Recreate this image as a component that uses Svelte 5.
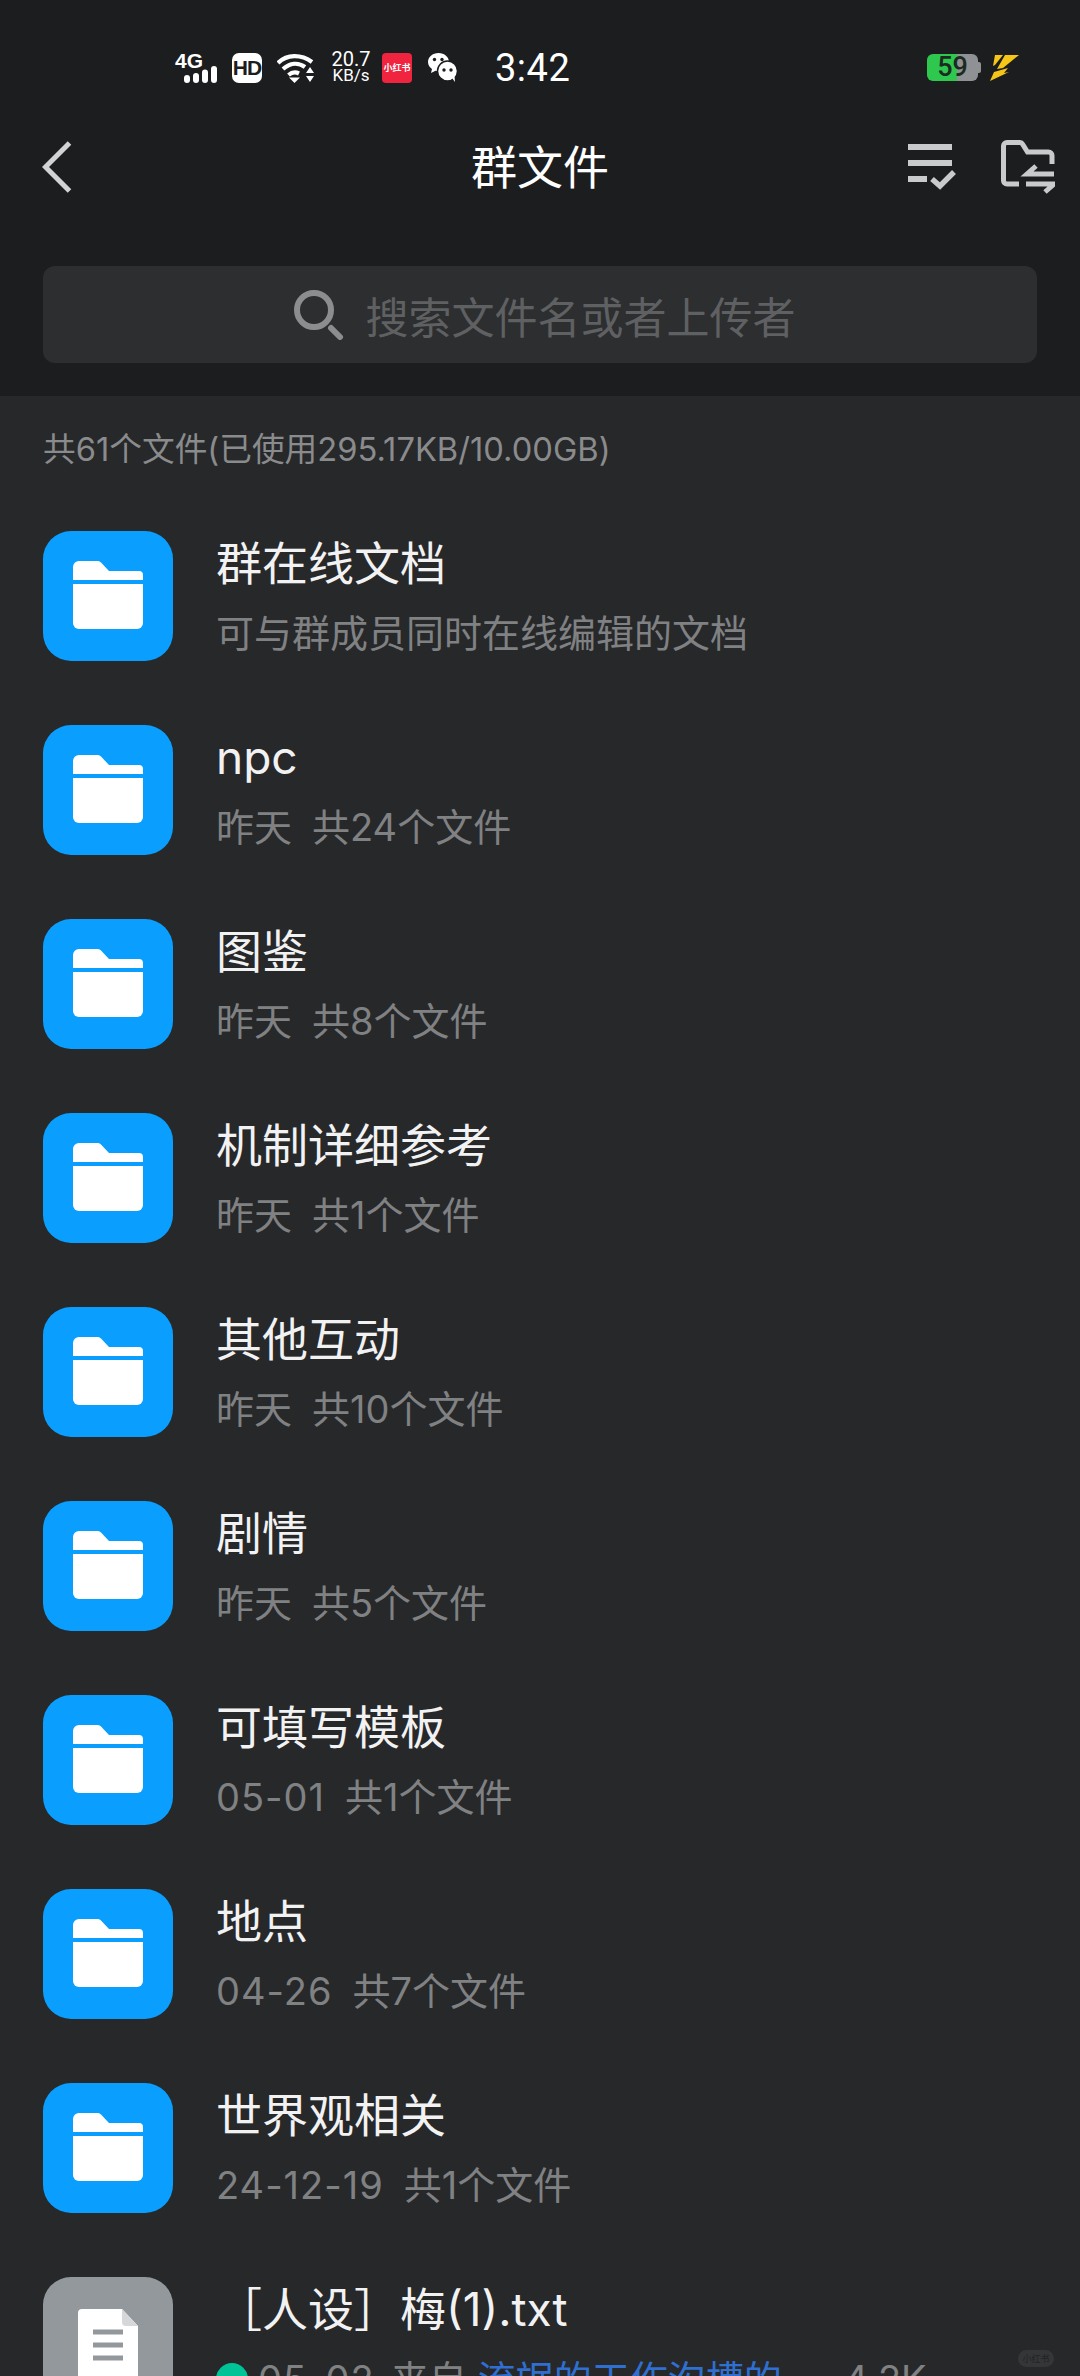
<script>
  const rows = [
    { name: '群在线文档', date: '可与群成员同时在线编辑的文档', count: '' },
    { name: 'npc', date: '昨天', count: '共24个文件' },
    { name: '图鉴', date: '昨天', count: '共8个文件' },
    { name: '机制详细参考', date: '昨天', count: '共1个文件' },
    { name: '其他互动', date: '昨天', count: '共10个文件' },
    { name: '剧情', date: '昨天', count: '共5个文件' },
    { name: '可填写模板', date: '05-01', count: '共1个文件', num: true },
    { name: '地点', date: '04-26', count: '共7个文件', num: true },
    { name: '世界观相关', date: '24-12-19', count: '共1个文件', num: true }
  ];
</script>

<div class="page">
  <header class="head">
    <div class="status">
      <div class="sig">
        <span class="g4">4G</span>
        <svg width="34" height="17" viewBox="0 0 34 17"><g fill="#fff"><rect x="0" y="9" width="6" height="8" rx="3"/><rect x="9" y="7" width="6" height="10" rx="3"/><rect x="18" y="3.500" width="6" height="13.500" rx="3"/><rect x="27" y="0" width="6" height="17" rx="3"/></g></svg>
      </div>
      <span class="hd">HD</span>
      <svg class="wifi" width="38" height="30" viewBox="0 0 38 30" fill="none" stroke="#fff" stroke-width="4.200"><path d="M1 10C10 1 24 1 35 9"/><path d="M6 16C13 10 21 9 28 14"/><path d="M11.500 22C15 19 19 19 22 20.500"/><path d="M12 24.500h11l-5.500 5.500z" fill="#fff" stroke="none"/><path d="M33 14l4 6h-8zM29 23h8l-4 6z" fill="#fff" stroke="none"/></svg>
      <div class="speed"><span>20.7</span><span class="unit">KB/s</span></div>
      <span class="xhs">小红书</span>
      <svg class="wx" width="31" height="31" viewBox="0 0 31 31"><path d="M11.500 1C5.500 1 1 5 1 10c0 3 1.500 5.300 4 7l-1 4 4.500-2.300c1.200.3 2 .4 3 .4C19 19 22 14 22 10 22 5 17.500 1 11.500 1z" fill="#fff"/><circle cx="20.500" cy="19" r="10" fill="#fff" stroke="#1c1d1f" stroke-width="1.500"/><path d="M25 26l3 4-.5-6z" fill="#fff"/><circle cx="7.500" cy="7.500" r="1.700" fill="#1c1d1f"/><circle cx="15" cy="7.500" r="1.700" fill="#1c1d1f"/><circle cx="17" cy="18" r="1.700" fill="#1c1d1f"/><circle cx="24" cy="18" r="1.700" fill="#1c1d1f"/></svg>
      <span class="time">3:42</span>
      <div class="spacer"></div>
      <div class="batt">59</div>
      <svg class="bolt" width="30" height="26" viewBox="0 0 30 26" fill="#f5c518"><path d="M5 0h8L5 10l-2 1zM15 0h14L13 13l-6 1zM0 26l4-9 14-4-4 5 5-1z"/></svg>
    </div>
    <nav class="nav">
      <svg width="30" height="52" viewBox="0 0 30 52" fill="none" stroke="#d2d3d4" stroke-width="5"><path d="M27.500 2L3.500 26l24 24"/></svg>
      <h1>群文件</h1>
      <div class="actions">
        <svg width="48" height="46" viewBox="0 0 48 46" fill="none" stroke="#c9cacb" stroke-width="6"><path d="M0 3h44M0 19h44M0 35h19"/><path d="M24 35l8 7 14-14" stroke-width="5.500"/></svg>
        <svg width="54" height="54" viewBox="0 0 54 54" fill="none" stroke="#c9cacb" stroke-width="5"><path d="M18 44H6a3.500 3.500 0 0 1-3.500-3.500V6A3.500 3.500 0 0 1 6 2.500h13a3 3 0 0 1 2.500 1.500l5 8h21A3.500 3.500 0 0 1 51 15.500V24"/><path d="M53 34H26l9-8" stroke-width="5"/><path d="M25 44h28l-9 8" stroke-width="5"/></svg>
      </div>
    </nav>
    <div class="search">
      <svg width="50" height="50" viewBox="0 0 50 50" fill="none" stroke="#8c8d8f" stroke-width="6"><circle cx="20" cy="20" r="17"/><path d="M37 38l9 9" stroke-linecap="round"/></svg>
      <span>搜索文件名或者上传者</span>
    </div>
  </header>

  <main class="body">
    <p class="total">共61个文件(已使用295.17KB/10.00GB)</p>
    {#each rows as r}
      <div class="row">
        <div class="icon folder">
          <svg width="130" height="130" viewBox="0 0 130 130" fill="#fff"><path d="M30 36a6 6 0 0 1 6-6h19a4 4 0 0 1 3 1.500L66 40h30a4 4 0 0 1 4 4v5H30z"/><path d="M30 53h70v39a6 6 0 0 1-6 6H36a6 6 0 0 1-6-6z"/></svg>
        </div>
        <div class="text">
          <div class="name">{r.name}</div>
          <div class="sub"><span class:num={r.num}>{r.date}</span>{#if r.count}<span>{r.count}</span>{/if}</div>
        </div>
      </div>
    {/each}
    <div class="row">
      <div class="icon file">
        <svg width="130" height="130" viewBox="0 0 130 130"><path d="M39 32h40l16 17v55a4 4 0 0 1-4 4H39a4 4 0 0 1-4-4V36a4 4 0 0 1 4-4z" fill="#fff"/><path d="M79 32l16 17H83a4 4 0 0 1-4-4z" fill="#d5d7d9"/><path d="M50 55h30M50 68h30M50 81h30" stroke="#93989c" stroke-width="5"/></svg>
      </div>
      <div class="text">
        <div class="name">［人设］梅(1).txt</div>
        <div class="sub meta">
          <i class="dot"></i>
          <span class="num">05-02</span>
          <span class="from">来自</span>
          <span class="link">流氓的工作沟槽的</span>
          <span class="size">4.2K</span>
        </div>
      </div>
    </div>
  </main>
  <span class="mark">小红书</span>
</div>

<style>
  :global(body) { margin: 0; background: #27282a; }
  .page { position: relative; width: 1080px; height: 2376px; overflow: hidden; background: #27282a; color: #fff; font-family: Inter, "Noto Sans CJK SC", sans-serif; }
  .head { height: 396px; background: #1c1d1f; box-sizing: border-box; padding-top: 52px; }
  .status { display: flex; align-items: center; height: 31px; padding: 0 60px 0 175px; }
  .sig { position: relative; display: flex; flex-direction: column; align-items: flex-end; width: 43px; height: 30px; }
  .g4 { position: absolute; left: 0; top: -2px; font: 700 21px/20px "Liberation Sans", sans-serif; }
  .sig svg { position: absolute; right: 0; bottom: 0; }
  .hd { width: 30px; height: 30px; margin-left: 14px; background: #fff; border-radius: 7px; color: #1c1d1f; font: 700 21px/30px "Liberation Sans", sans-serif; text-align: center; letter-spacing: -1px; }
  .wifi { margin-left: 15px; }
  .speed { display: flex; flex-direction: column; align-items: center; gap: 1px; width: 38px; margin-left: 17px; font: 20px/15px Roboto, sans-serif; }
  .unit { font-size: 17px; line-height: 15px; }
  .xhs { width: 30px; height: 30px; margin-left: 12px; background: #f0243f; border-radius: 4px; font: 700 9px/30px "Noto Sans CJK SC", sans-serif; text-align: center; white-space: nowrap; }
  .wx { margin-left: 15px; }
  .time { margin-left: 37px; font: 400 38px/38px Roboto, sans-serif; letter-spacing: .5px; }
  .spacer { flex: 1; }
  .batt { position: relative; width: 51px; height: 27px; border-radius: 6px; background: linear-gradient(90deg, #2ec84f 0 30px, #8f9194 30px); color: #1c2a20; font: 500 27px/27px Roboto, sans-serif; text-align: center; }
  .batt::after { content: ""; position: absolute; right: -3px; top: 8px; width: 3px; height: 11px; background: #8f9194; border-radius: 0 2px 2px 0; }
  .bolt { margin-left: 12px; }
  .nav { position: relative; display: flex; align-items: center; justify-content: space-between; height: 60px; margin-top: 54px; padding: 0 25px 0 42px; }
  .nav h1 { position: absolute; left: 0; right: 0; top: 0; margin: 0; font-size: 46px; line-height: 60px; font-weight: 400; text-align: center; }
  .actions { display: flex; align-items: center; gap: 45px; }
  .search { display: flex; align-items: center; justify-content: center; gap: 22px; height: 97px; margin: 69px 43px 0; padding-left: 9px; background: #2d2e30; border-radius: 12px; color: #5f6062; font-size: 43px; }
  .total { margin: 0; height: 103px; padding: 30px 0 0 43px; box-sizing: border-box; font-size: 32.700px; line-height: 46px; color: #8a8b8d; }
  .row { display: flex; align-items: center; gap: 43px; height: 194px; padding-left: 43px; }
  .icon { flex: none; width: 130px; height: 130px; border-radius: 28px; overflow: hidden; }
  .folder { background: #0a9fff; }
  .file { background: #93989c; }
  .icon svg { display: block; }
  .text { flex: 1; min-width: 0; }
  .name { font-size: 46px; line-height: 62px; color: #f2f2f3; white-space: nowrap; }
  .sub { display: flex; gap: 20px; margin-top: 12px; font-size: 38px; line-height: 54px; color: #808183; white-space: nowrap; }
  .num { letter-spacing: 1px; }
  .meta { align-items: center; gap: 11px; }
  .dot { flex: none; width: 32px; height: 32px; margin-right: -1px; border-radius: 50%; background: #00c497; }
  .from { margin-left: 5px; }
  .link { color: #2f6fd0; }
  .size { margin-left: 51px; }
  .mark { position: absolute; right: 26px; bottom: 9px; width: 36px; height: 17px; border-radius: 9px; background: #353638; color: #222325; font-size: 9px; line-height: 17px; text-align: center; }
</style>
